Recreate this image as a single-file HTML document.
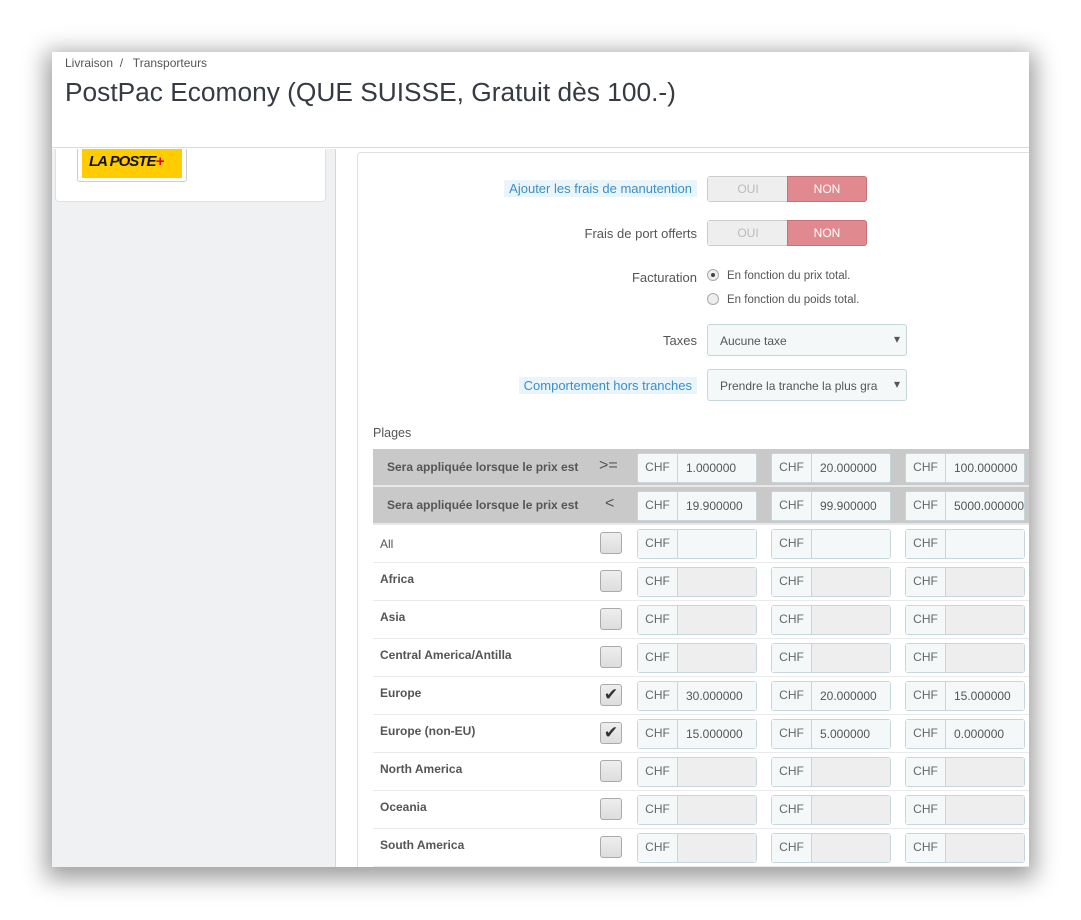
<!DOCTYPE html>
<html><head><meta charset="utf-8"><style>
*{box-sizing:border-box;margin:0;padding:0}
body{width:1081px;height:920px;background:#fff;font-family:"Liberation Sans",sans-serif;position:relative;overflow:hidden;color:#555}
#page{position:absolute;left:52px;top:52px;width:977px;height:815px;background:#fff;box-shadow:0 6px 22px 6px rgba(0,0,0,.38);overflow:hidden}
.hdr{position:absolute;left:0;top:0;width:977px;height:96px;background:#fff;border-bottom:1px solid #d9dde0}
.bc{position:absolute;left:13px;top:4px;font-size:12px;color:#555}
.title{position:absolute;left:13px;top:25px;font-size:26.3px;color:#363a41}
.left{position:absolute;left:0;top:97px;width:284px;height:718px;background:#eff1f2;border-right:1px solid #d3d8db}
.lp{position:absolute;left:3px;top:0;width:271px;height:53px;background:#fff;border:1px solid #dde1e3;border-top:none;border-radius:0 0 4px 4px}
.logo{position:absolute;left:21px;top:0;width:110px;height:33px;border:1px solid #ccc;border-top:none;border-radius:0 0 3px 3px;padding:0 4px 3px}
.logo div{background:#ffcc00;height:29px;font:italic bold 15px "Liberation Sans",sans-serif;color:#111;padding:4px 0 0 7px;letter-spacing:-1px}
.logo span{color:#e2001a}
.panel{position:absolute;left:305px;top:100px;width:690px;height:730px;border:1px solid #dde1e3;border-radius:4px;background:#fff}
.lbl{position:absolute;right:332px;font-size:13px;color:#555;text-align:right;white-space:nowrap}
.hl{background:#eaf4fb;color:#3a8fc8;padding:1px 5px}
.sw{position:absolute;left:655px;width:160px;height:26px;border:1px solid #ccc;border-radius:3px;display:flex;font-size:12px}
.sw .o{width:80px;background:#eee;color:#bbb;text-align:center;line-height:24px}
.sw .n{width:80px;background:#e08a90;color:#fff;text-align:center;line-height:24px;border:1px solid #c97077;margin:-1px;border-radius:0 3px 3px 0}
.rad{position:absolute;left:655px;font-size:11.5px;color:#555}
.rad i{display:inline-block;width:12px;height:12px;border:1px solid #aaa;border-radius:50%;background:#eee;vertical-align:-2px;margin-right:8px;position:relative}
.rad i.on:after{content:"";position:absolute;left:3px;top:3px;width:4px;height:4px;border-radius:50%;background:#444}
.sel{position:absolute;left:655px;width:200px;height:32px;border:1px solid #c7d6db;border-radius:3px;background:#f5f8f9;font-size:12px;color:#555;padding:9px 12px;white-space:nowrap;overflow:hidden}
.sel:after{content:"▾";position:absolute;right:6px;top:7px;font-size:12px;background:#f5f8f9}
.row{position:absolute;left:321px;width:660px;height:38px;border-bottom:1px solid #eaeaea}
.row.g{background:#c9c9c9;border-bottom:2px solid #e8e8e8}
.rn{position:absolute;left:7px;top:9px;font-size:12px;font-weight:bold;color:#555}
.row.g .rn{left:14px;top:11px}
.op{position:absolute;left:226px;top:8px;font-size:16px;color:#555}
.cb{position:absolute;left:227px;top:7px;width:22px;height:22px;border:1px solid #aaa;border-radius:3px;background:linear-gradient(#eee,#ddd);font-size:17px;line-height:20px;text-align:center;color:#333}
.ig{position:absolute;top:4px;width:120px;height:30px;border:1px solid #c7d6db;border-radius:3px;display:flex;font-size:12px}
.ig .a{width:40px;background:#f5f8f9;border-right:1px solid #c7d6db;text-align:center;line-height:26px;color:#666}
.ig .v{flex:1;background:#eee;padding-left:8px;line-height:28px;color:#555;white-space:nowrap;overflow:hidden}
.ig .v.w{background:#f5f8f9}
</style></head><body>
<div id="page">
<div class="hdr"><div class="bc">Livraison &nbsp;/&nbsp;&nbsp; Transporteurs</div><div class="title">PostPac Ecomony (QUE SUISSE, Gratuit dès 100.-)</div></div>
<div class="left"><div class="lp"><div class="logo"><div>LA POSTE<span>+</span></div></div></div></div>
<div class="panel"></div>
<div class="lbl" style="top:129px"><span class="hl">Ajouter les frais de manutention</span></div>
<div class="sw" style="top:124px"><div class="o">OUI</div><div class="n">NON</div></div>
<div class="lbl" style="top:174px">Frais de port offerts</div>
<div class="sw" style="top:168px"><div class="o">OUI</div><div class="n">NON</div></div>
<div class="lbl" style="top:218px">Facturation</div>
<div class="rad" style="top:217px"><i class="on"></i>En fonction du prix total.</div>
<div class="rad" style="top:241px"><i></i>En fonction du poids total.</div>
<div class="lbl" style="top:281px">Taxes</div>
<div class="sel" style="top:272px">Aucune taxe</div>
<div class="lbl" style="top:326px"><span class="hl">Comportement hors tranches</span></div>
<div class="sel" style="top:317px">Prendre la tranche la plus gra</div>
<div style="position:absolute;left:321px;top:374px;font-size:12.5px;color:#555">Plages</div>

<div class="row g" style="top:397px"><div class="rn">Sera appliquée lorsque le prix est</div><div class="op">&gt;=</div>
<div class="ig" style="left:264px"><div class="a">CHF</div><div class="v w">1.000000</div></div>
<div class="ig" style="left:398px"><div class="a">CHF</div><div class="v w">20.000000</div></div>
<div class="ig" style="left:532px"><div class="a">CHF</div><div class="v w">100.000000</div></div></div>
<div class="row g" style="top:435px"><div class="rn">Sera appliquée lorsque le prix est</div><div class="op" style="left:232px">&lt;</div>
<div class="ig" style="left:264px"><div class="a">CHF</div><div class="v w">19.900000</div></div>
<div class="ig" style="left:398px"><div class="a">CHF</div><div class="v w">99.900000</div></div>
<div class="ig" style="left:532px"><div class="a">CHF</div><div class="v w">5000.000000</div></div></div>

<div class="row" style="top:473px"><div class="rn" style="font-weight:normal;top:12px">All</div><div class="cb"></div>
<div class="ig" style="left:264px"><div class="a">CHF</div><div class="v w"></div></div>
<div class="ig" style="left:398px"><div class="a">CHF</div><div class="v w"></div></div>
<div class="ig" style="left:532px"><div class="a">CHF</div><div class="v w"></div></div></div>
<div class="row" style="top:511px"><div class="rn">Africa</div><div class="cb"></div><div class="ig" style="left:264px"><div class="a">CHF</div><div class="v"></div></div><div class="ig" style="left:398px"><div class="a">CHF</div><div class="v"></div></div><div class="ig" style="left:532px"><div class="a">CHF</div><div class="v"></div></div></div>
<div class="row" style="top:549px"><div class="rn">Asia</div><div class="cb"></div><div class="ig" style="left:264px"><div class="a">CHF</div><div class="v"></div></div><div class="ig" style="left:398px"><div class="a">CHF</div><div class="v"></div></div><div class="ig" style="left:532px"><div class="a">CHF</div><div class="v"></div></div></div>
<div class="row" style="top:587px"><div class="rn">Central America/Antilla</div><div class="cb"></div><div class="ig" style="left:264px"><div class="a">CHF</div><div class="v"></div></div><div class="ig" style="left:398px"><div class="a">CHF</div><div class="v"></div></div><div class="ig" style="left:532px"><div class="a">CHF</div><div class="v"></div></div></div>
<div class="row" style="top:625px"><div class="rn">Europe</div><div class="cb">✔</div><div class="ig" style="left:264px"><div class="a">CHF</div><div class="v w">30.000000</div></div><div class="ig" style="left:398px"><div class="a">CHF</div><div class="v w">20.000000</div></div><div class="ig" style="left:532px"><div class="a">CHF</div><div class="v w">15.000000</div></div></div>
<div class="row" style="top:663px"><div class="rn">Europe (non-EU)</div><div class="cb">✔</div><div class="ig" style="left:264px"><div class="a">CHF</div><div class="v w">15.000000</div></div><div class="ig" style="left:398px"><div class="a">CHF</div><div class="v w">5.000000</div></div><div class="ig" style="left:532px"><div class="a">CHF</div><div class="v w">0.000000</div></div></div>
<div class="row" style="top:701px"><div class="rn">North America</div><div class="cb"></div><div class="ig" style="left:264px"><div class="a">CHF</div><div class="v"></div></div><div class="ig" style="left:398px"><div class="a">CHF</div><div class="v"></div></div><div class="ig" style="left:532px"><div class="a">CHF</div><div class="v"></div></div></div>
<div class="row" style="top:739px"><div class="rn">Oceania</div><div class="cb"></div><div class="ig" style="left:264px"><div class="a">CHF</div><div class="v"></div></div><div class="ig" style="left:398px"><div class="a">CHF</div><div class="v"></div></div><div class="ig" style="left:532px"><div class="a">CHF</div><div class="v"></div></div></div>
<div class="row" style="top:777px"><div class="rn">South America</div><div class="cb"></div><div class="ig" style="left:264px"><div class="a">CHF</div><div class="v"></div></div><div class="ig" style="left:398px"><div class="a">CHF</div><div class="v"></div></div><div class="ig" style="left:532px"><div class="a">CHF</div><div class="v"></div></div></div>
</div>
</body></html>
